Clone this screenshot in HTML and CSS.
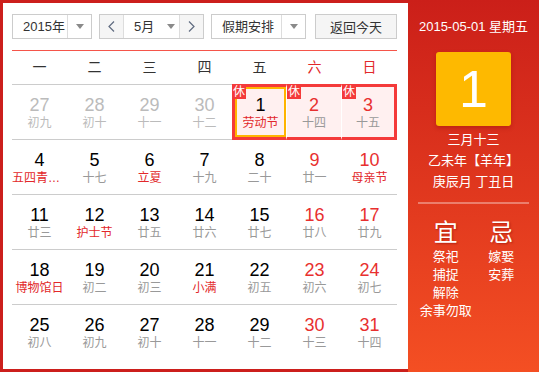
FILE: index.html
```html
<!DOCTYPE html>
<html>

<head>
    <meta name="viewport" content="width=device-width, initial-scale=1.0" charset="utf-8">
    <title>万年历</title>
    <link rel="stylesheet" href="styles.css">
</head>

<body>
    <div class="calendar">
      <div class="main">
        <div class="toolbar">
          <div class="select year">
            <span class="select-text">2015年</span>
            <span class="select-arrow"><i class="caret"></i></span>
          </div>
          <div class="month-nav">
            <span class="nav-btn">
              <svg width="7" height="11" viewBox="0 0 7 11"><polyline points="6,0.5 1,5.5 6,10.5"></polyline></svg>
            </span>
            <span class="month-text"><span>5月</span><i class="caret"></i></span>
            <span class="nav-btn">
              <svg width="7" height="11" viewBox="0 0 7 11"><polyline points="1,0.5 6,5.5 1,10.5"></polyline></svg>
            </span>
          </div>
          <div class="select holiday">
            <span class="select-text">假期安排</span>
            <span class="select-arrow"><i class="caret"></i></span>
          </div>
          <button class="today-btn">返回今天</button>
        </div>

        <div class="weekdays">
          <span>一</span><span>二</span><span>三</span><span>四</span><span>五</span>
          <span class="weekend">六</span><span class="weekend">日</span>
        </div>

        <div class="week">
          <div class="day other"><span class="num">27</span><span class="lunar">初九</span></div>
          <div class="day other"><span class="num">28</span><span class="lunar">初十</span></div>
          <div class="day other"><span class="num">29</span><span class="lunar">十一</span></div>
          <div class="day other"><span class="num">30</span><span class="lunar">十二</span></div>
          <div class="day rest rest-start today"><i class="badge">休</i><span class="num">1</span><span class="lunar fest">劳动节</span></div>
          <div class="day rest sat"><i class="badge">休</i><span class="num">2</span><span class="lunar">十四</span></div>
          <div class="day rest rest-end sun"><i class="badge">休</i><span class="num">3</span><span class="lunar">十五</span></div>
        </div>
        <div class="week">
          <div class="day"><span class="num">4</span><span class="lunar fest">五四青年节</span></div>
          <div class="day"><span class="num">5</span><span class="lunar">十七</span></div>
          <div class="day"><span class="num">6</span><span class="lunar fest">立夏</span></div>
          <div class="day"><span class="num">7</span><span class="lunar">十九</span></div>
          <div class="day"><span class="num">8</span><span class="lunar">二十</span></div>
          <div class="day sat"><span class="num">9</span><span class="lunar">廿一</span></div>
          <div class="day sun"><span class="num">10</span><span class="lunar fest">母亲节</span></div>
        </div>
        <div class="week">
          <div class="day"><span class="num">11</span><span class="lunar">廿三</span></div>
          <div class="day"><span class="num">12</span><span class="lunar fest">护士节</span></div>
          <div class="day"><span class="num">13</span><span class="lunar">廿五</span></div>
          <div class="day"><span class="num">14</span><span class="lunar">廿六</span></div>
          <div class="day"><span class="num">15</span><span class="lunar">廿七</span></div>
          <div class="day sat"><span class="num">16</span><span class="lunar">廿八</span></div>
          <div class="day sun"><span class="num">17</span><span class="lunar">廿九</span></div>
        </div>
        <div class="week">
          <div class="day"><span class="num">18</span><span class="lunar fest">博物馆日</span></div>
          <div class="day"><span class="num">19</span><span class="lunar">初二</span></div>
          <div class="day"><span class="num">20</span><span class="lunar">初三</span></div>
          <div class="day"><span class="num">21</span><span class="lunar fest">小满</span></div>
          <div class="day"><span class="num">22</span><span class="lunar">初五</span></div>
          <div class="day sat"><span class="num">23</span><span class="lunar">初六</span></div>
          <div class="day sun"><span class="num">24</span><span class="lunar">初七</span></div>
        </div>
        <div class="week last">
          <div class="day"><span class="num">25</span><span class="lunar">初八</span></div>
          <div class="day"><span class="num">26</span><span class="lunar">初九</span></div>
          <div class="day"><span class="num">27</span><span class="lunar">初十</span></div>
          <div class="day"><span class="num">28</span><span class="lunar">十一</span></div>
          <div class="day"><span class="num">29</span><span class="lunar">十二</span></div>
          <div class="day sat"><span class="num">30</span><span class="lunar">十三</span></div>
          <div class="day sun"><span class="num">31</span><span class="lunar">十四</span></div>
        </div>
      </div>

      <div class="side">
        <div class="side-date">2015-05-01 星期五</div>
        <div class="big-day">1</div>
        <div class="lunar-info">
          <p>三月十三</p>
          <p>乙未年【羊年】</p>
          <p>庚辰月 丁丑日</p>
        </div>
        <div class="divider"></div>
        <div class="yiji">
          <div class="yiji-col">
            <h3>宜</h3>
            <p>祭祀</p>
            <p>捕捉</p>
            <p>解除</p>
            <p>余事勿取</p>
          </div>
          <div class="yiji-col">
            <h3>忌</h3>
            <p>嫁娶</p>
            <p>安葬</p>
          </div>
        </div>
      </div>
    </div>
</body>
</html>
```

FILE: styles.css
```css
* {
  box-sizing: border-box;
}
body {
  margin: 0;
  font-family: "Liberation Sans", "Noto Sans CJK SC", sans-serif;
  background: #fff;
}
.calendar {
  display: flex;
  width: 539px;
  height: 372px;
}
.main {
  width: 408px;
  border: 3px solid #cc1f1c;
  border-right: none;
  background: #fff;
  padding: 11px 11px 0 9px;
}

/* toolbar */
.toolbar {
  display: flex;
  height: 25px;
  font-size: 13px;
  color: #333;
  white-space: nowrap;
}
.select, .month-nav {
  display: flex;
  border: 1px solid #ccc;
  background: #fff;
  margin-right: 7px;
}
.year {
  width: 80px;
}
.holiday {
  width: 95px;
}
.select-text {
  flex: 1;
  padding-left: 10px;
  line-height: 23px;
}
.select-arrow {
  width: 24px;
  border-left: 1px solid #ddd;
  display: flex;
  align-items: center;
  justify-content: center;
}
.caret {
  display: inline-block;
  border-left: 4px solid transparent;
  border-right: 4px solid transparent;
  border-top: 5px solid #8a8a8a;
}
.month-nav {
  width: 105px;
}
.nav-btn {
  width: 23px;
  background: #f5f5f5;
  display: flex;
  align-items: center;
  justify-content: center;
}
.nav-btn svg {
  fill: none;
  stroke: #5f6b80;
  stroke-width: 1.2;
}
.month-text {
  flex: 1;
  border-left: 1px solid #ddd;
  border-right: 1px solid #ddd;
  padding-left: 10px;
  line-height: 23px;
  display: flex;
  align-items: center;
}
.month-text .caret {
  margin-left: 13px;
}
.today-btn {
  margin-left: auto;
  width: 82px;
  height: 25px;
  border: 1px solid #ccc;
  background: #f5f5f5;
  font-family: inherit;
  font-size: 13px;
  color: #333;
  padding: 0;
}

/* grid */
.weekdays {
  display: grid;
  grid-template-columns: repeat(7, 55px);
  margin-top: 11px;
  height: 35px;
  border-top: 1px solid #f5554a;
  border-bottom: 1px solid #ccc;
  font-size: 14px;
  line-height: 33px;
  text-align: center;
  color: #333;
}
.weekdays .weekend {
  color: #e2282a;
}
.week {
  display: grid;
  grid-template-columns: repeat(7, 55px);
  height: 55px;
  border-bottom: 1px solid #ccc;
}
.week.last {
  border-bottom: none;
}
.day {
  position: relative;
  display: flex;
  flex-direction: column;
  align-items: center;
  padding-top: 10px;
  min-width: 0;
}
.num {
  font-size: 18px;
  line-height: 20px;
  color: #000;
}
.lunar {
  font-size: 12px;
  line-height: 16px;
  color: #999;
  max-width: 100%;
  white-space: nowrap;
  overflow: hidden;
  text-overflow: ellipsis;
}
.sat .num, .sun .num {
  color: #e8302f;
}
.lunar.fest {
  color: #e2282a;
}
.other .num, .other .lunar {
  color: #bbb;
}

/* holidays */
.rest {
  background: #fff0f0;
  margin: -1px 0;
  padding-top: 8px;
  border-top: 3px solid #f43a3a;
  border-bottom: 3px solid #f43a3a;
  border-right: 1px solid #fff;
}
.rest-start {
  border-left: 3px solid #f43a3a;
}
.rest-end {
  border-right: 3px solid #f43a3a;
}
.today {
  box-shadow: inset 0 0 0 2px #ffb400;
}
.badge {
  position: absolute;
  top: -2px;
  left: 0;
  width: 14px;
  height: 14px;
  background: #f43a3a;
  color: #fff;
  font-style: normal;
  font-size: 12px;
  line-height: 14px;
  text-align: center;
}
.rest-start .badge {
  left: -3px;
}

/* side panel */
.side {
  flex: 1;
  background: linear-gradient(#cb1f19, #f44f23);
  color: #fff;
  text-align: center;
  padding: 18px 10px 0;
}
.side-date {
  font-size: 13px;
  line-height: 18px;
}
.big-day {
  width: 75px;
  height: 74px;
  margin: 16px auto 0;
  background: #feb900;
  border-radius: 3px;
  box-shadow: 0 2px 4px rgba(120, 0, 0, 0.3);
  font-size: 52px;
  line-height: 74px;
}
.lunar-info {
  margin-top: 3px;
}
.lunar-info p {
  margin: 0;
  font-size: 13px;
  line-height: 21px;
}
.divider {
  height: 2px;
  margin-top: 10px;
  background: rgba(255, 255, 255, 0.35);
}
.yiji {
  display: grid;
  grid-template-columns: 1fr 1fr;
  margin-top: 15px;
}
.yiji-col h3 {
  margin: 0 0 1px;
  font-size: 24px;
  line-height: 28px;
  font-weight: normal;
  text-shadow: 1px 1px 2px rgba(120, 0, 0, 0.45);
}
.yiji-col p {
  margin: 0;
  font-size: 13px;
  line-height: 18px;
  white-space: nowrap;
}
```
